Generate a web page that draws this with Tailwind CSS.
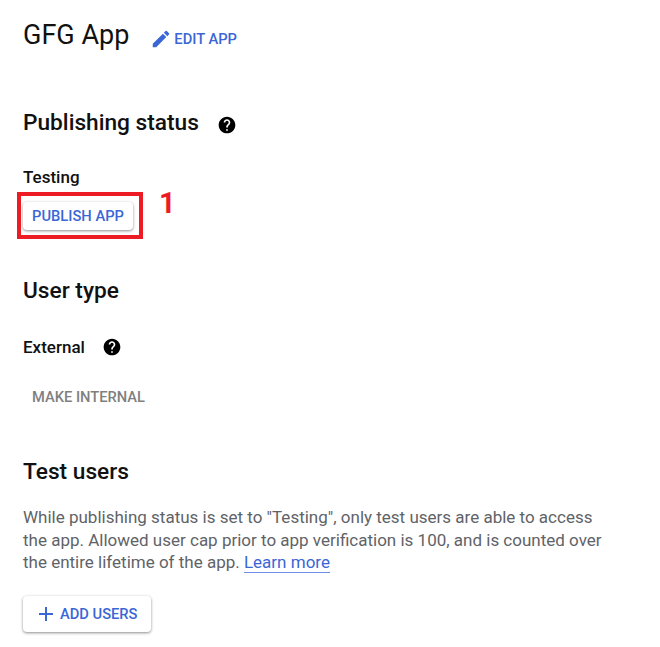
<!DOCTYPE html>
<html lang="en">
<head>
  <meta charset="UTF-8" />
  <title>GFG App</title>
  <script src="https://cdn.jsdelivr.net/npm/@tailwindcss/browser@4"></script>
</head>
<body class="bg-white font-['Roboto',sans-serif] text-[#111]">
  <div class="w-[660px] h-[647px] overflow-hidden pl-[23px] pt-[17px]">

    <!-- App name -->
    <div class="flex items-center h-[36px]">
      <h1 class="text-[27px] leading-[36px] font-normal">GFG App</h1>
      <a class="flex items-center ml-[21px] mt-[8px] text-[#3b66d6] text-[14.7px] font-medium">
        <svg class="w-[22px] h-[22px] mr-[2px]" viewBox="0 0 24 24" fill="#3b66d6"><path d="M3 17.25V21h3.75L17.81 9.94l-3.75-3.75L3 17.25zM20.71 7.04a1 1 0 0 0 0-1.41l-2.34-2.34a1 1 0 0 0-1.41 0l-1.83 1.83 3.75 3.75 1.83-1.83z"/></svg>
        EDIT APP
      </a>
    </div>

    <!-- Publishing status -->
    <div class="flex items-center mt-[56px] h-[28px]">
      <h2 class="text-[22.7px] leading-[28px] font-medium">Publishing status</h2>
      <svg class="w-[20px] h-[20px] ml-[18px] mt-[4px]" viewBox="0 0 24 24" fill="#000"><path d="M12 2C6.48 2 2 6.48 2 12s4.48 10 10 10 10-4.48 10-10S17.52 2 12 2zm1 17h-2v-2h2v2zm2.07-7.75l-.9.92C13.45 12.9 13 13.5 13 15h-2v-.5c0-1.1.45-2.1 1.17-2.83l1.24-1.26c.37-.36.59-.86.59-1.41 0-1.1-.9-2-2-2s-2 .9-2 2H8c0-2.21 1.79-4 4-4s4 1.79 4 4c0 .88-.36 1.68-.93 2.25z"/></svg>
    </div>
    <p class="mt-[29px] text-[17px] leading-[22px] font-medium">Testing</p>

    <div class="relative mt-[14px]">
      <button class="block h-[28px] w-[110px] bg-white rounded-[4px] text-[#3b66d6] text-[14.7px] font-medium shadow-[0_1px_3px_rgba(0,0,0,0.45)]">PUBLISH APP</button>
      <div class="absolute left-[-6px] top-[-10px] w-[126px] h-[47px] border-[4px] border-[#ed1c24]"></div>
      <span class="absolute left-[136px] top-[-19px] text-[#ed1c24] text-[29px] leading-[40px] font-bold">1</span>
    </div>

    <!-- User type -->
    <h2 class="mt-[47px] text-[22.7px] leading-[28px] font-medium">User type</h2>
    <div class="flex items-center mt-[30px] h-[24px]">
      <p class="text-[17px] leading-[22px] font-medium">External</p>
      <svg class="w-[20px] h-[20px] ml-[17px]" viewBox="0 0 24 24" fill="#000"><path d="M12 2C6.48 2 2 6.48 2 12s4.48 10 10 10 10-4.48 10-10S17.52 2 12 2zm1 17h-2v-2h2v2zm2.07-7.75l-.9.92C13.45 12.9 13 13.5 13 15h-2v-.5c0-1.1.45-2.1 1.17-2.83l1.24-1.26c.37-.36.59-.86.59-1.41 0-1.1-.9-2-2-2s-2 .9-2 2H8c0-2.21 1.79-4 4-4s4 1.79 4 4c0 .88-.36 1.68-.93 2.25z"/></svg>
    </div>
    <p class="mt-[28px] ml-[9px] text-[14.7px] leading-[20px] font-medium text-[#7f7f7f]">MAKE INTERNAL</p>

    <!-- Test users -->
    <h2 class="mt-[51px] text-[22.7px] leading-[28px] font-medium">Test users</h2>
    <p class="mt-[20px] w-[590px] text-[17px] leading-[22.7px] text-[#5f6368]">
      While publishing status is set to "Testing", only test users are able to access the app. Allowed user cap prior to app verification is 100, and is counted over the entire lifetime of the app. <a class="text-[#3b66d6] border-b border-[#6f8fe6]">Learn more</a>
    </p>
    <button class="flex items-center mt-[22px] h-[36px] w-[128px] pl-[11px] bg-white rounded-[4px] text-[#3b66d6] text-[14.7px] font-medium shadow-[0_1px_3px_rgba(0,0,0,0.45)]">
      <svg class="w-[24px] h-[24px] mr-[2px]" viewBox="0 0 24 24" fill="#3b66d6"><path d="M19 13h-6v6h-2v-6H5v-2h6V5h2v6h6v2z" /></svg>
      ADD USERS
    </button>
  </div>
</body>
</html>
